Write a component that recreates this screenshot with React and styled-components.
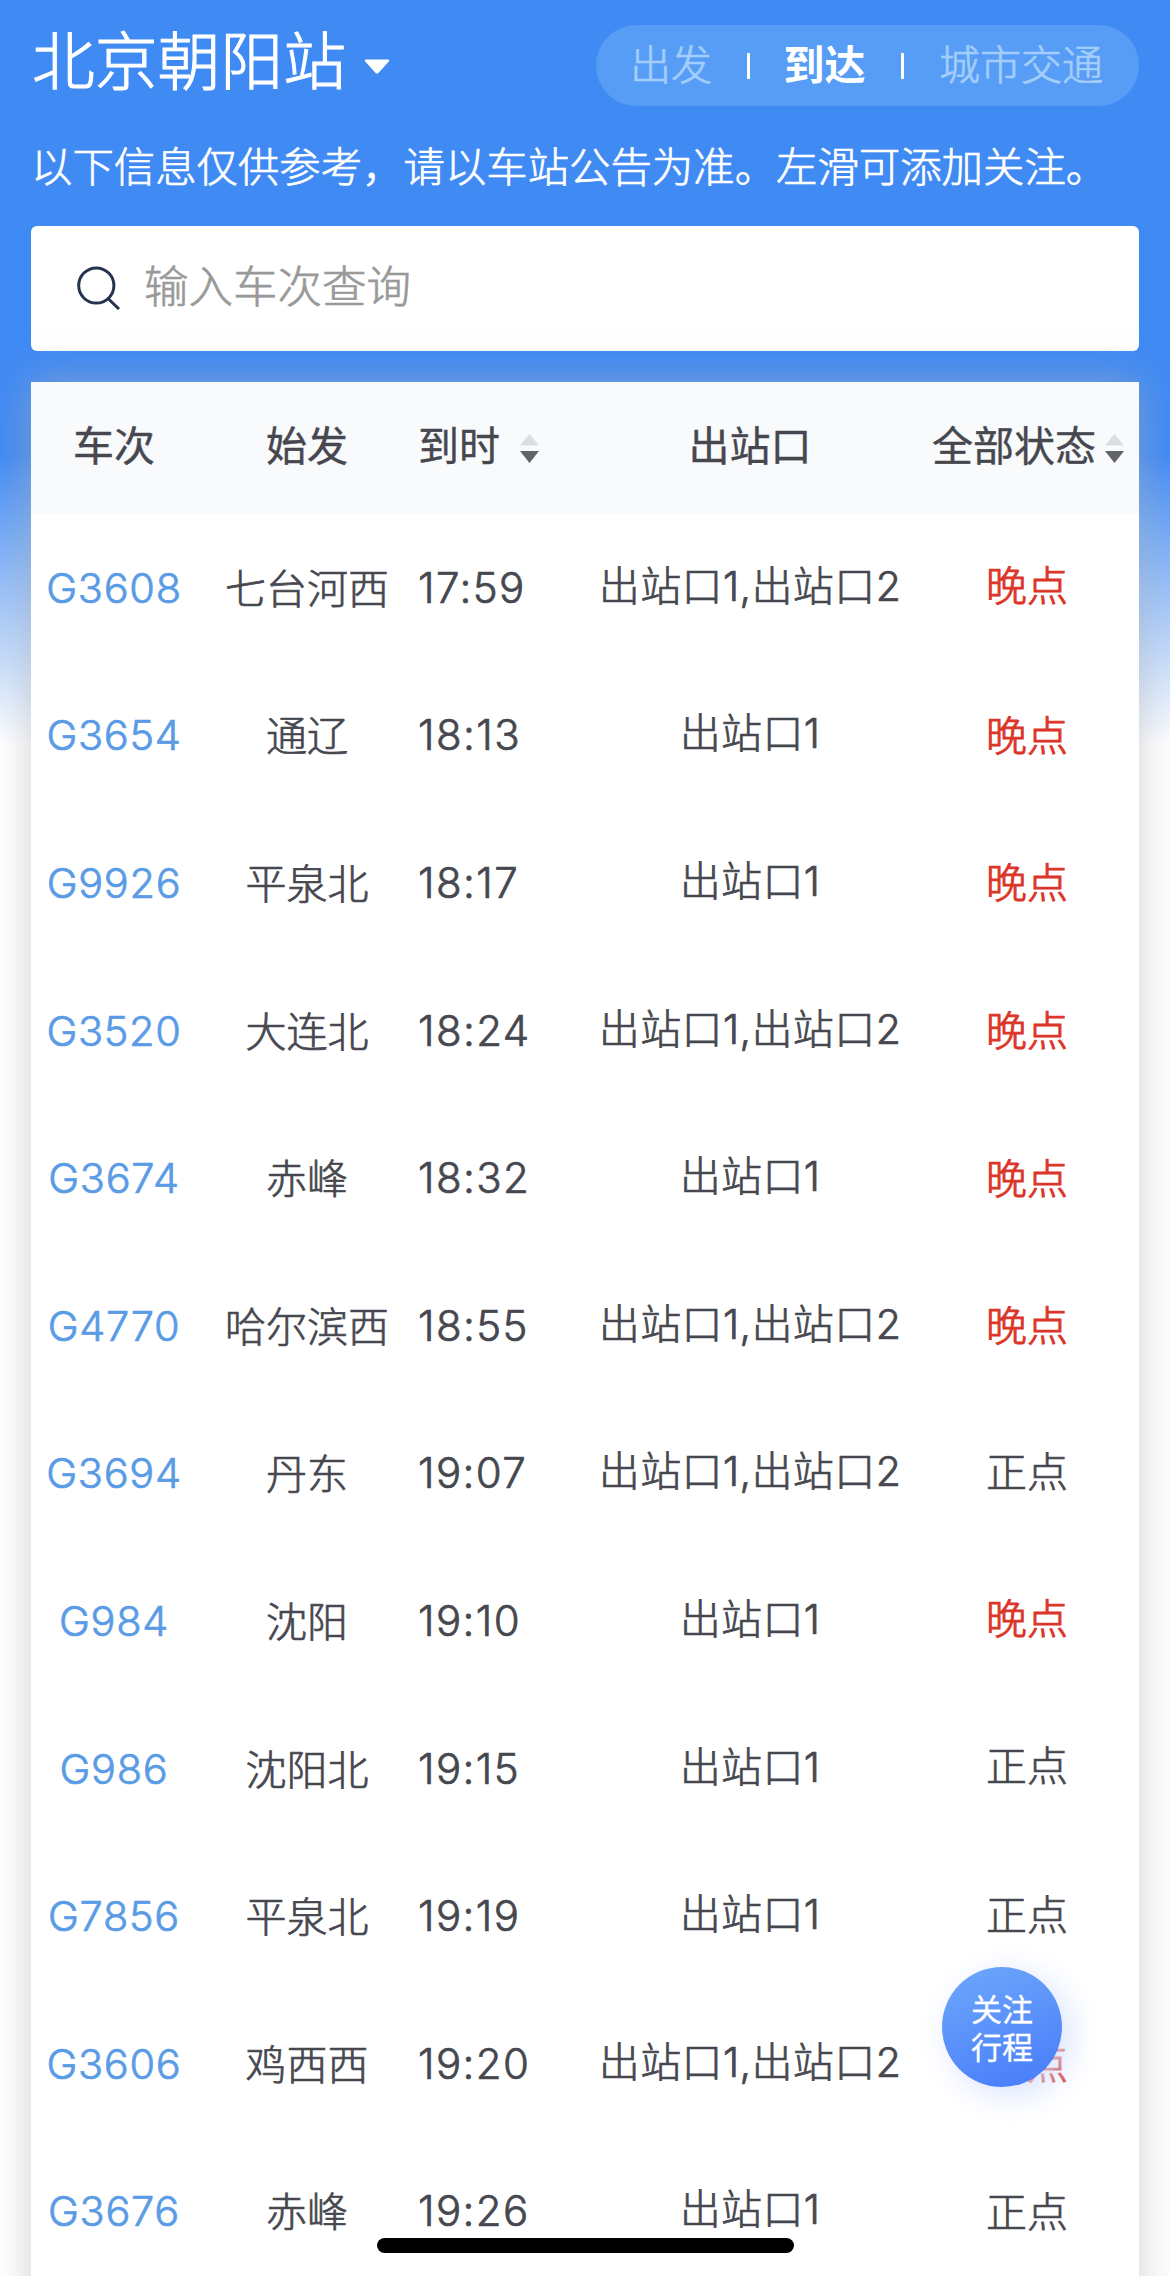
import React from "react";
import styled, { createGlobalStyle } from "styled-components";

// lift: how many px the status label sits above the row's baseline
const trains = [
  { no: "G3608", from: "七台河西", time: "17:59", exit: "出站口1,出站口2", late: true, lift: 2 },
  { no: "G3654", from: "通辽", time: "18:13", exit: "出站口1", late: true },
  { no: "G9926", from: "平泉北", time: "18:17", exit: "出站口1", late: true },
  { no: "G3520", from: "大连北", time: "18:24", exit: "出站口1,出站口2", late: true },
  { no: "G3674", from: "赤峰", time: "18:32", exit: "出站口1", late: true },
  { no: "G4770", from: "哈尔滨西", time: "18:55", exit: "出站口1,出站口2", late: true },
  { no: "G3694", from: "丹东", time: "19:07", exit: "出站口1,出站口2", late: false, lift: 2 },
  { no: "G984", from: "沈阳", time: "19:10", exit: "出站口1", late: true, lift: 2 },
  { no: "G986", from: "沈阳北", time: "19:15", exit: "出站口1", late: false, lift: 3 },
  { no: "G7856", from: "平泉北", time: "19:19", exit: "出站口1", late: false, lift: 2 },
  { no: "G3606", from: "鸡西西", time: "19:20", exit: "出站口1,出站口2", late: true },
  { no: "G3676", from: "赤峰", time: "19:26", exit: "出站口1", late: false },
];

const SortArrows = () => (
  <SortIcon viewBox="0 0 19 29">
    <path d="M9.5 0 L19 11.5 H0 Z" fill="#dcdddf" />
    <path d="M0 17 H19 L9.5 29 Z" fill="#636468" />
  </SortIcon>
);

const App = () => {
  return (
    <Page>
      <GlobalStyle />
      <TopBar>
        <Station>
          <StationName>北京朝阳站</StationName>
          <Caret viewBox="0 0 26 15">
            <path d="M2 0.5 H24 Q26 0.8 24.8 2.4 L14.4 14 Q13 15.2 11.6 14 L1.2 2.4 Q0 0.8 2 0.5 Z" fill="#fff" />
          </Caret>
        </Station>
        <Tabs>
          <Tab>出发</Tab>
          <TabLine />
          <Tab $active>到达</Tab>
          <TabLine />
          <Tab>城市交通</Tab>
        </Tabs>
      </TopBar>
      <Notice>以下信息仅供参考，请以车站公告为准。左滑可添加关注。</Notice>
      <SearchBox>
        <SearchIcon viewBox="0 0 44 44">
          <circle cx="19.3" cy="19.5" r="17.6" />
          <path d="M30.5 32 L42 43" />
        </SearchIcon>
        <span>输入车次查询</span>
      </SearchBox>

      <Board>
        <HeadRow>
          <Cell>车次</Cell>
          <Cell>始发</Cell>
          <TimeHead>
            到时
            <SortArrows />
          </TimeHead>
          <Cell>出站口</Cell>
          <StatusHead>
            全部状态
            <SortArrows />
          </StatusHead>
        </HeadRow>
        {trains.map((train) => (
          <Row key={train.no}>
            <TrainNo>{train.no}</TrainNo>
            <Origin>{train.from}</Origin>
            <Time>{train.time}</Time>
            <Exit>{train.exit}</Exit>
            <Status $late={train.late} $lift={train.lift}>
              {train.late ? "晚点" : "正点"}
            </Status>
          </Row>
        ))}
      </Board>

      <FollowButton>
        关注
        <br />
        行程
      </FollowButton>
      <HomeIndicator />
    </Page>
  );
};

const GlobalStyle = createGlobalStyle`
  * {
    box-sizing: border-box;
  }
  body {
    margin: 0;
    background: #fff;
  }
`;

const Page = styled.div`
  position: relative;
  width: 1170px;
  height: 2276px;
  overflow: hidden;
  background: linear-gradient(#408af4 0, #408af4 455px, #fff 745px);
  font-family: Inter, "Noto Sans CJK SC", sans-serif;
  font-size: 41px;
  font-weight: 300;
  color: #46474f;
  white-space: nowrap;
  -webkit-text-stroke: 0.7px currentColor;
`;

const TopBar = styled.div`
  display: flex;
  justify-content: space-between;
  align-items: center;
  height: 106px;
  padding: 25px 31px 0;
`;

const Station = styled.div`
  display: flex;
  align-items: center;
  height: 70px;
  color: #fff;
`;

const StationName = styled.h1`
  margin: -10px 0 0 1px;
  font-size: 62.8px;
  font-weight: 300;
  line-height: 70px;
  -webkit-text-stroke-width: 1.1px;
`;

const Caret = styled.svg`
  width: 26px;
  height: 15px;
  margin: 2px 0 0 18px;
`;

const Tabs = styled.div`
  display: flex;
  align-items: center;
  justify-content: space-between;
  width: 543px;
  height: 81px;
  padding: 0 36px 0 34px;
  border-radius: 41px;
  background: #579df6;
`;

const Tab = styled.span`
  margin: -2px 0 0 ${({ $active }) => ($active ? "-2px" : "0")};
  line-height: 60px;
  font-weight: ${({ $active }) => ($active ? 700 : 300)};
  color: ${({ $active }) => ($active ? "#fff" : "#a3cefb")};
  -webkit-text-stroke-width: ${({ $active }) => ($active ? "0" : "0.7px")};
`;

const TabLine = styled.i`
  width: 3px;
  height: 26px;
  background: #fff;
`;

const Notice = styled.p`
  height: 120px;
  margin: 0;
  padding: 31px 0 0 31px;
  font-size: 41.4px;
  line-height: 60px;
  color: #fff;
`;

const SearchBox = styled.div`
  display: flex;
  align-items: center;
  height: 125px;
  margin: 0 31px;
  padding-left: 46px;
  border-radius: 6px;
  background: #fff;
  font-size: 44.5px;
  line-height: 60px;
  color: #999;

  span {
    margin: -4px 0 0 23px;
  }
`;

const SearchIcon = styled.svg`
  width: 44px;
  height: 44px;
  margin-top: -1px;
  fill: none;
  stroke: #26334f;
  stroke-width: 3;
`;

const Board = styled.div`
  margin: 31px 31px 0;
  height: 1930px;
  background: #fff;
  box-shadow: 0 0 38px rgba(174, 176, 178, 0.58);
`;

const HeadRow = styled.div`
  display: grid;
  grid-template-columns: 166px 220px 170px 326px 226px;
  align-items: center;
  height: 132px;
  padding-bottom: 4px;
  background: #f8fafc;
  font-weight: 400;
  -webkit-text-stroke-width: 0.4px;
`;

const Row = styled.div`
  display: grid;
  grid-template-columns: 166px 220px 170px 326px 226px;
  align-items: center;
  height: 147.6px;
`;

const Cell = styled.div`
  line-height: 60px;
  text-align: center;
`;

const Origin = styled(Cell)`
  margin-top: 2px;
`;

const TimeHead = styled.div`
  display: flex;
  align-items: center;
  gap: 20px;
  padding-left: 1px;
  line-height: 60px;
`;

const StatusHead = styled(TimeHead)`
  gap: 9px;
  padding-left: 19px;
`;

const SortIcon = styled.svg`
  width: 19px;
  height: 29px;
  margin-top: 5px;
`;

const TrainNo = styled(Cell)`
  font-size: 41.5px;
  color: #5a9be6;
  letter-spacing: 0.7px;
`;

const Time = styled.div`
  padding-left: 1px;
  font-size: 42px;
  line-height: 60px;
  letter-spacing: 1.4px;
`;

const Exit = styled(Cell)`
  margin-top: -4px;
  letter-spacing: 0.4px;
`;

const Status = styled(Cell)`
  padding-left: 2px;
  margin-top: ${({ $lift = 0 }) => 1 - 2 * $lift}px;
  color: ${({ $late }) => ($late ? "#db3528" : "#46474f")};
  -webkit-text-stroke-width: ${({ $late }) => ($late ? "1px" : "0.7px")};
`;

const FollowButton = styled.div`
  position: absolute;
  left: 942px;
  top: 1967px;
  width: 120px;
  height: 120px;
  padding-top: 24px;
  border-radius: 50%;
  background: linear-gradient(160deg, #6ea8fb, #467bfa);
  box-shadow: 9px 8px 32px rgba(215, 226, 253, 0.95);
  font-size: 31px;
  font-weight: 400;
  line-height: 38px;
  text-align: center;
  color: #fff;
  -webkit-text-stroke-width: 0.3px;
`;

const HomeIndicator = styled.div`
  position: absolute;
  left: 377px;
  top: 2238px;
  width: 417px;
  height: 15px;
  border-radius: 8px;
  background: #000;
`;

export default App;
